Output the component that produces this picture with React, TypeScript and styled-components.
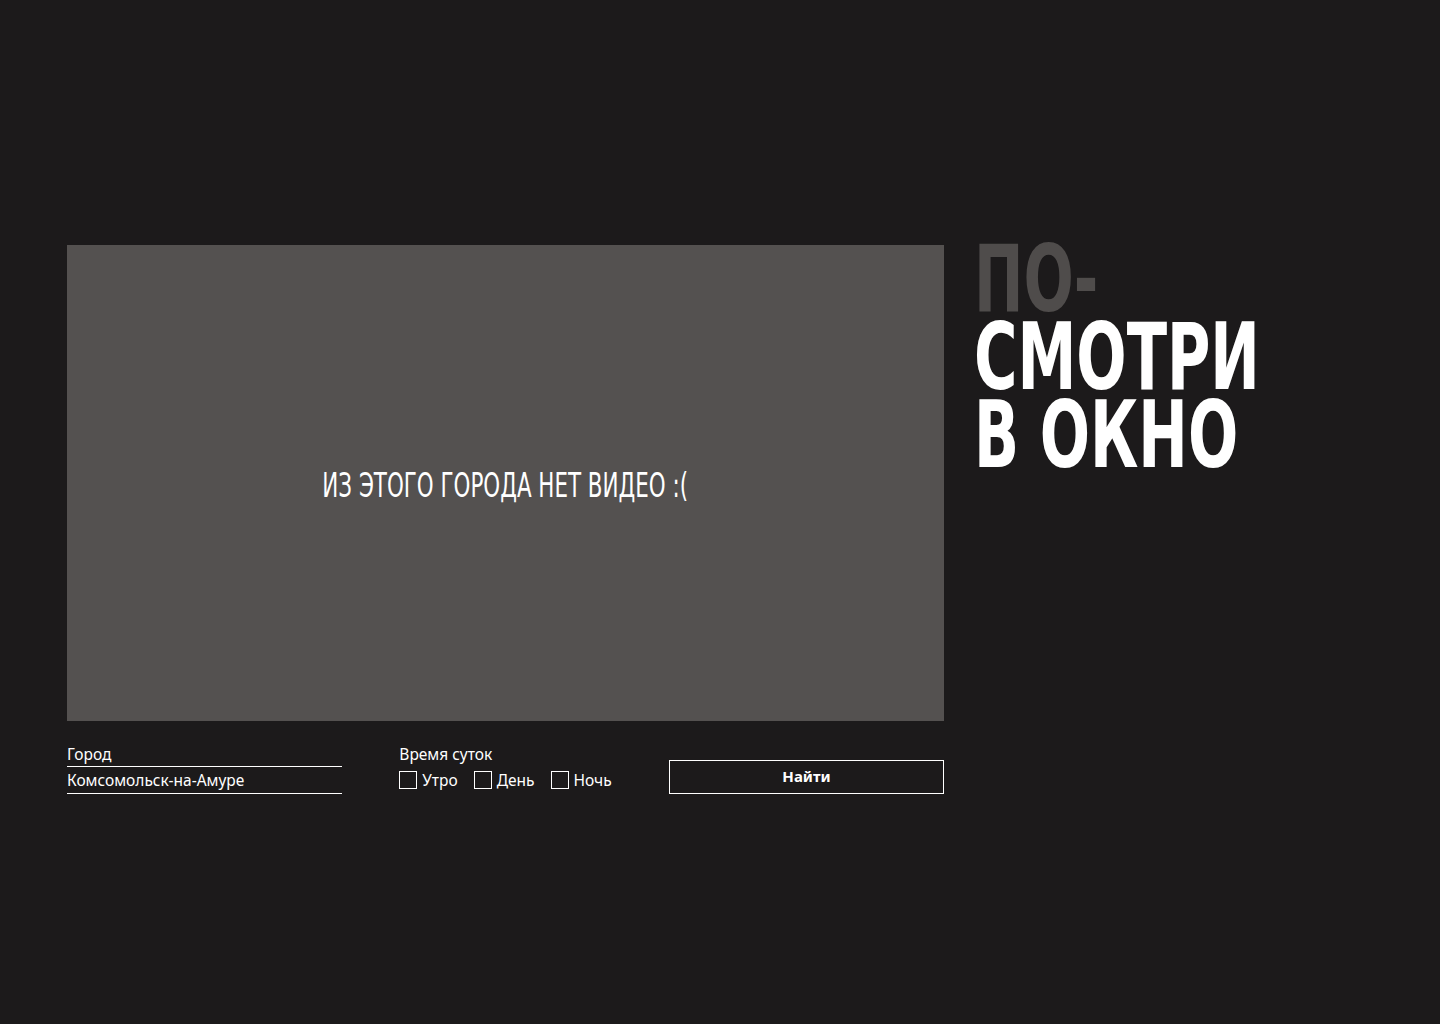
import React from 'react';
import styled, { createGlobalStyle } from 'styled-components';

const GlobalStyle = createGlobalStyle`
  html, body {
    margin: 0;
    padding: 0;
    background: #1c1a1b;
    color: #ffffff;
    font-family: 'Noto Sans', 'Open Sans', sans-serif;
  }
`;

const Page = styled.div`
  width: 1440px;
  height: 1024px;
  box-sizing: border-box;
  padding: 245px 0 0 67px;
  display: flex;
  flex-direction: row;
  gap: 32px;
  align-items: flex-start;
`;

const Main = styled.div`
  width: 877px;
  display: flex;
  flex-direction: column;
  gap: 23px;
`;

const VideoBox = styled.div`
  width: 877px;
  height: 476px;
  background: #545150;
  display: flex;
  align-items: center;
  justify-content: center;
`;

const EmptyText = styled.div`
  font-family: 'DejaVu Sans Condensed', 'DejaVu Sans', sans-serif;
  font-stretch: condensed;
  font-size: 34px;
  font-weight: 300;
  transform: scaleX(0.7);
  white-space: nowrap;
  margin-top: 4px;
`;

const Form = styled.div`
  display: flex;
  flex-direction: row;
  justify-content: space-between;
  align-items: flex-end;
`;

const Field = styled.div`
  width: 275px;
  display: flex;
  flex-direction: column;
`;

const Label = styled.div`
  font-size: 15.5px;
  line-height: 20px;
  padding-bottom: 2px;
`;

const CityValue = styled.div`
  font-size: 15.5px;
  line-height: 20px;
  border-top: 1px solid #ffffff;
  border-bottom: 1px solid #ffffff;
  padding: 3px 0 3px;
`;

const TimeGroup = styled.div`
  display: flex;
  flex-direction: column;
  padding-bottom: 4px;
`;

const Options = styled.div`
  display: flex;
  flex-direction: row;
  gap: 16px;
  margin-top: 4px;
`;

const Option = styled.label`
  display: flex;
  align-items: center;
  gap: 5px;
  font-size: 15.5px;
  line-height: 20px;
`;

const Box = styled.span`
  width: 18px;
  height: 18px;
  box-sizing: border-box;
  border: 1px solid #ffffff;
  display: inline-block;
`;

const SearchButton = styled.button`
  width: 275px;
  height: 34px;
  box-sizing: border-box;
  background: transparent;
  border: 1px solid #ffffff;
  color: #ffffff;
  font-family: 'Noto Sans', 'Open Sans', sans-serif;
  font-size: 15px;
  font-weight: 700;
  padding: 0 0 2px;
  cursor: pointer;
`;

const Title = styled.h1`
  margin: -4px 0 0 -2px;
  font-family: 'DejaVu Sans Condensed', 'DejaVu Sans', sans-serif;
  font-stretch: condensed;
  font-weight: 700;
  font-size: 92px;
  line-height: 78px;
  transform: scaleX(0.715);
  transform-origin: left top;
  white-space: nowrap;
`;

const TitleLine = styled.div<{ $muted?: boolean }>`
  color: ${(p) => (p.$muted ? '#4f4c4b' : '#ffffff')};
`;

export default function App() {
  return (
    <>
      <GlobalStyle />
      <Page>
        <Main>
          <VideoBox>
            <EmptyText>ИЗ ЭТОГО ГОРОДА НЕТ ВИДЕО :(</EmptyText>
          </VideoBox>
          <Form>
            <Field>
              <Label>Город</Label>
              <CityValue>Комсомольск-на-Амуре</CityValue>
            </Field>
            <TimeGroup>
              <Label>Время суток</Label>
              <Options>
                <Option>
                  <Box />
                  Утро
                </Option>
                <Option>
                  <Box />
                  День
                </Option>
                <Option>
                  <Box />
                  Ночь
                </Option>
              </Options>
            </TimeGroup>
            <SearchButton>Найти</SearchButton>
          </Form>
        </Main>
        <Title>
          <TitleLine $muted>ПО-</TitleLine>
          <TitleLine>СМОТРИ</TitleLine>
          <TitleLine>В ОКНО</TitleLine>
        </Title>
      </Page>
    </>
  );
}
